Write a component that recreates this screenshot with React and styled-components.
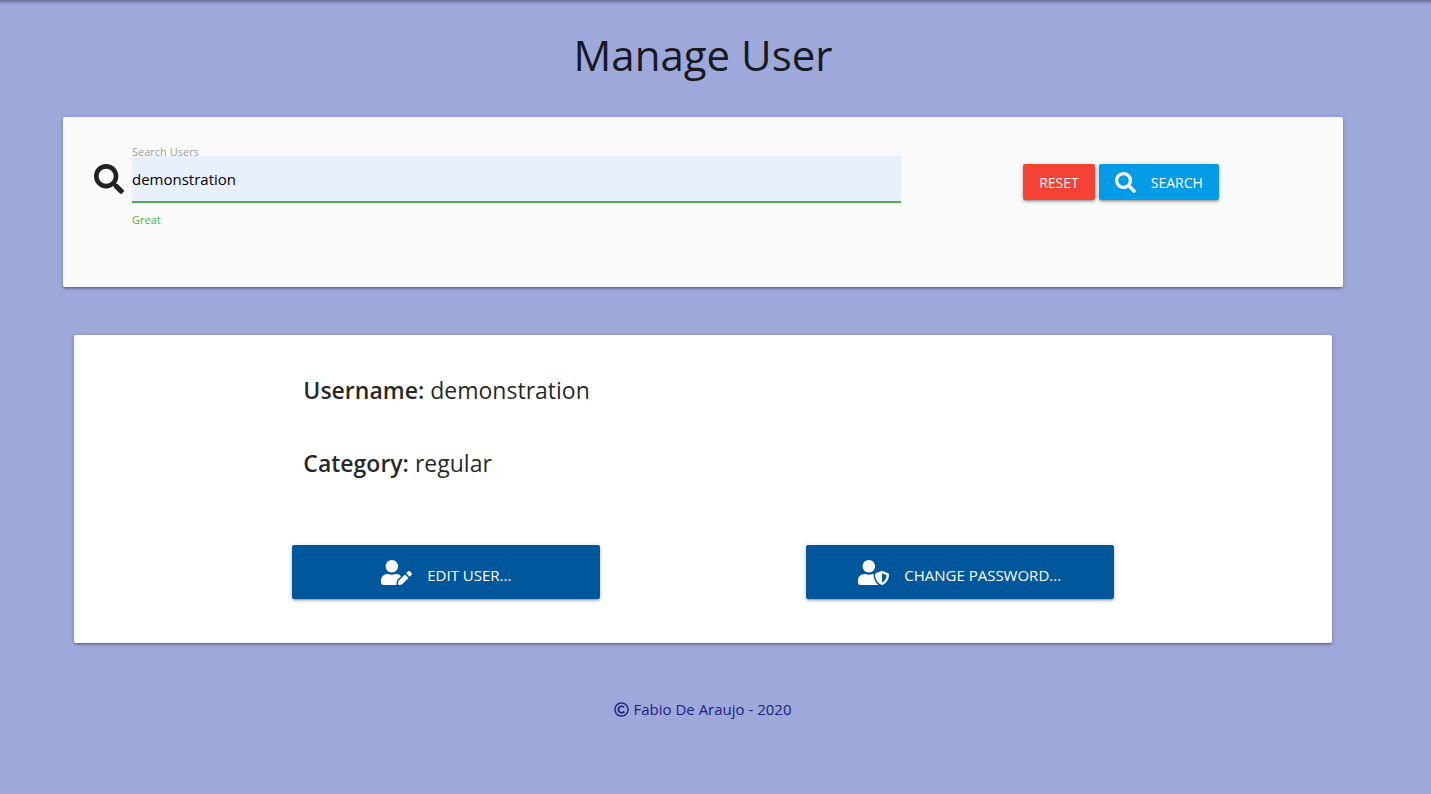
import React, { useState } from "react";
import styled, { createGlobalStyle } from "styled-components";
import { FaSearch, FaUserEdit, FaUserShield, FaRegCopyright } from "react-icons/fa";

const GlobalStyle = createGlobalStyle`
  *, *::before, *::after { box-sizing: border-box; }
  body {
    margin: 0;
    background: #9fa8da;
    color: rgba(0, 0, 0, 0.87);
    font-family: "Segoe UI", "Open Sans", "Noto Sans", sans-serif;
    font-size: 15px;
    line-height: 24px;
  }
`;

const depth = `
  box-shadow: 0 2px 2px 0 rgba(0, 0, 0, 0.14), 0 3px 1px -2px rgba(0, 0, 0, 0.12),
    0 1px 5px 0 rgba(0, 0, 0, 0.2);
`;

const Page = styled.div`
  min-height: 100vh;
  padding-right: 25px;
  background: linear-gradient(rgba(0, 0, 0, 0.3) 1px, rgba(0, 0, 0, 0.16) 2px, rgba(0, 0, 0, 0) 5px);
`;

const Container = styled.main`
  width: 100%;
  max-width: 1280px;
  margin: 0 auto;
`;

const Title = styled.h1`
  margin: 0;
  padding: 31px 0 38px;
  font-size: 42px;
  line-height: 48px;
  font-weight: 400;
  text-align: center;
`;

const SearchCard = styled.form`
  display: grid;
  grid-template-columns: 2fr 1fr;
  align-items: start;
  min-height: 170px;
  padding: 27px 13px;
  border-radius: 2px;
  background: #fafafa;
  ${depth}
`;

const Field = styled.div`
  display: grid;
  grid-template-columns: 45px 1fr;
  padding: 0 11px;
`;

const FieldIcon = styled.span`
  display: flex;
  grid-row: 2;
  align-items: flex-start;
  padding: 8px 0 0 7px;
  font-size: 30px;
`;

const FieldLabel = styled.label`
  grid-column: 2;
  height: 12px;
  color: #9e9e9e;
  font-size: 11px;
  line-height: 16px;
`;

const FieldInput = styled.input`
  grid-column: 2;
  width: 100%;
  height: 47px;
  padding: 0;
  border: 0;
  border-bottom: 2px solid #4caf50;
  outline: 0;
  border-radius: 0;
  background: #e8f0fe;
  color: #000;
  font-family: inherit;
  font-size: 15px;
`;

const FieldHint = styled.span`
  grid-column: 2;
  padding-top: 8px;
  color: #4caf50;
  font-size: 11px;
  line-height: 18px;
`;

const Actions = styled.div`
  display: flex;
  justify-content: center;
  gap: 4px;
  padding-top: 20px;
`;

const Button = styled.button`
  display: inline-flex;
  align-items: center;
  justify-content: center;
  gap: 15px;
  height: 36px;
  padding: 0 16px;
  border: 0;
  border-radius: 2px;
  background: ${(p) => p.$color};
  color: #fff;
  font-family: inherit;
  font-size: 14px;
  text-transform: uppercase;
  cursor: pointer;
  ${depth}
`;

const WideButton = styled(Button)`
  grid-column: ${(p) => p.$start} / span 3;
  height: 54px;
  font-size: 15px;
`;

const WideButtonLabel = styled.span`
  padding-top: 6px;
`;

const UserEditIcon = styled(FaUserEdit)`
  width: 31px;
  height: 25px;
`;

const UserShieldIcon = styled(FaUserShield)`
  width: 31px;
  height: 25px;
`;

const SearchIcon = styled(FaSearch)`
  width: 21px;
  height: 21px;
`;

const UserCard = styled.section`
  margin: 48px 11px 0;
  padding: 36px 13px 44px;
  border-radius: 2px;
  background: #fff;
  ${depth}
`;

const Details = styled.dl`
  display: grid;
  grid-template-columns: repeat(12, 1fr);
  row-gap: 35px;
  margin: 0 0 63px;
`;

const Detail = styled.div`
  display: flex;
  grid-column: 3 / -1;
  gap: 6px;
  padding-left: 11px;
  font-size: 23px;
  line-height: 38px;

  dt { font-weight: 600; }
  dd { margin: 0; }
`;

const UserActions = styled.div`
  display: grid;
  grid-template-columns: repeat(12, 1fr);
`;

const Footer = styled.footer`
  display: flex;
  align-items: center;
  justify-content: center;
  gap: 4px;
  padding: 54px 0 24px;
  color: #1a237e;
  font-size: 15px;
`;

export default function App() {
  const [query, setQuery] = useState("demonstration");
  return (
    <Page>
      <GlobalStyle />
      <Container>
        <Title>Manage User</Title>
        <SearchCard onSubmit={(e) => e.preventDefault()}>
          <Field>
            <FieldLabel htmlFor="search">Search Users</FieldLabel>
            <FieldIcon><FaSearch /></FieldIcon>
            <FieldInput id="search" type="text" value={query} onChange={(e) => setQuery(e.target.value)} />
            <FieldHint>Great</FieldHint>
          </Field>
          <Actions>
            <Button type="button" $color="#f44336" onClick={() => setQuery("")}>Reset</Button>
            <Button type="submit" $color="#039be5"><SearchIcon />Search</Button>
          </Actions>
        </SearchCard>
        <UserCard>
          <Details>
            <Detail><dt>Username:</dt><dd>demonstration</dd></Detail>
            <Detail><dt>Category:</dt><dd>regular</dd></Detail>
          </Details>
          <UserActions>
            <WideButton type="button" $start={3} $color="#01579b">
              <UserEditIcon />
              <WideButtonLabel>Edit User...</WideButtonLabel>
            </WideButton>
            <WideButton type="button" $start={8} $color="#01579b">
              <UserShieldIcon />
              <WideButtonLabel>Change Password...</WideButtonLabel>
            </WideButton>
          </UserActions>
        </UserCard>
      </Container>
      <Footer><FaRegCopyright />Fabio De Araujo - 2020</Footer>
    </Page>
  );
}
